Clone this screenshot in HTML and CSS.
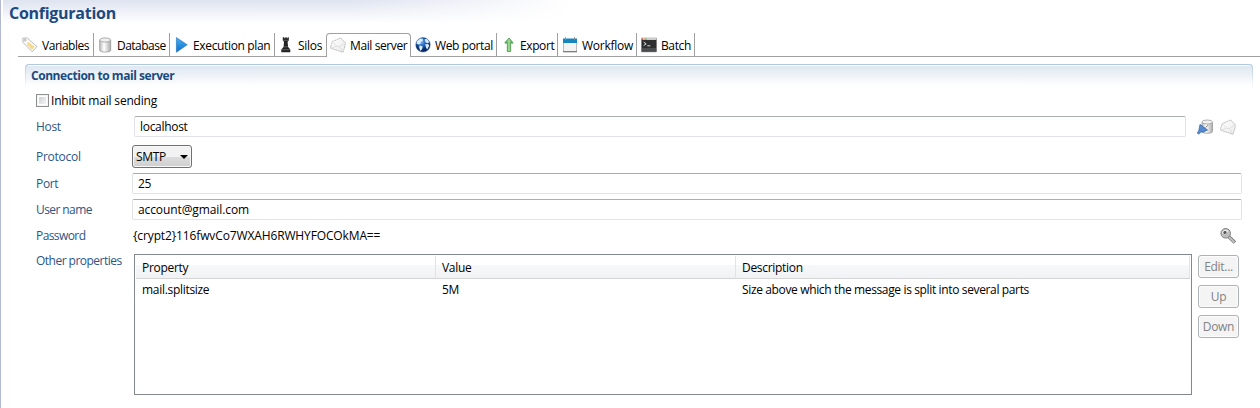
FILE: index.html
```html
<!DOCTYPE html>
<html lang="en">
<head>
<meta charset="utf-8">
<title>Configuration</title>
<link rel="stylesheet" href="styles.css">
</head>
<body>
<svg class="defs" width="0" height="0" aria-hidden="true">
  <defs>
    <linearGradient id="metal"><stop offset="0" stop-color="#bbb"/><stop offset=".4" stop-color="#fff"/><stop offset="1" stop-color="#aaa"/></linearGradient>
    <linearGradient id="blue" x2="0" y2="1"><stop offset="0" stop-color="#4cb0f5"/><stop offset="1" stop-color="#0b6fcc"/></linearGradient>
    <linearGradient id="green"><stop offset="0" stop-color="#3f9a43"/><stop offset=".5" stop-color="#a5dc98"/><stop offset="1" stop-color="#3f9a43"/></linearGradient>
    <linearGradient id="paper" x2="1" y2="1"><stop offset="0" stop-color="#fff"/><stop offset="1" stop-color="#ebebeb"/></linearGradient>
    <radialGradient id="sea" cx=".4" cy=".3"><stop offset="0" stop-color="#6fb5f5"/><stop offset=".6" stop-color="#1c5cb4"/><stop offset="1" stop-color="#082c66"/></radialGradient>
    <symbol id="mail" viewBox="0 0 16 16">
      <path d="M.6 9.8 2.3 4.6 10.8.9l1.4 2 3.2 2.6-.6 4.2-1.8 5.6L.7 11.2z" fill="url(#paper)" stroke="#b0b0b0" stroke-width=".8" stroke-dasharray="2 .5"/>
      <path d="m2.9 5.2 3.7 4.1 2.7.2 5.4-3.5M1.2 10.8l5.4-1.5M9.3 9.5l3.6 5" fill="none" stroke="#dadada" stroke-width=".8"/>
    </symbol>
  </defs>
</svg>
<main class="page">
  <h1 class="title">Configuration</h1>
  <nav class="tabs">
    <div class="tab w-variables">
      <svg class="icon" viewBox="0 0 16 16"><path d="M.7 1.2 5 .8l10 8.8-4.8 5.2L1 5.5z" fill="#fafafa" stroke="#b4b4b4" stroke-width=".9"/><path d="m6 4.8 6.7 5-2.8 3-5.3-5.5z" fill="#f6d98b"/><circle cx="3" cy="3.2" r="1" fill="#fff" stroke="#999" stroke-width=".7"/></svg>
      <span>Variables</span>
    </div>
    <div class="tab w-database">
      <svg class="icon" viewBox="0 0 16 16"><path d="M1.7 3v10.2c0 2.5 11 2.5 11 0V3" fill="url(#metal)" stroke="#999" stroke-width=".8"/><ellipse cx="7.2" cy="3" rx="5.5" ry="2.1" fill="#eee" stroke="#999" stroke-width=".8"/></svg>
      <span>Database</span>
    </div>
    <div class="tab w-plan">
      <svg class="icon" viewBox="0 0 16 16"><path d="M2.4.6 13.2 7.8 2.4 15.2z" fill="url(#blue)" stroke="#1a6dbb" stroke-width=".6"/></svg>
      <span>Execution plan</span>
    </div>
    <div class="tab w-silos">
      <svg class="icon" viewBox="0 0 16 16"><path d="M3.8.3h1.5v1h1v-1h1.4v1h1v-1h1.1v3L8.6 5l.5 5 2.2 2.6v2.7h-9v-2.7L4.6 10 5 5 3.8 3.3z" fill="#222"/><path d="M3.8 3.3h6M4.5 9.8h4.7M2.8 12.7h8" stroke="#777" stroke-width=".7"/></svg>
      <span>Silos</span>
    </div>
    <div class="tab tab-active w-mail">
      <svg class="icon"><use href="#mail"/></svg>
      <span>Mail server</span>
    </div>
    <div class="tab w-portal">
      <svg class="icon" viewBox="0 0 16 16"><circle cx="8" cy="7.8" r="7.2" fill="url(#sea)" stroke="#26508c" stroke-width=".5"/><path d="M2 4.3 5 1.6l2.7.2.4 1.7-2.3 1.6-.3 2-2 .5-1.9-.8zM9.5 2.4l2.3-.7 2.5 3.2-1.5 1.5-2-1zM4.7 8.2l3 1.4-.5 2.4-1.8 2-1.3-3.2zM10.1 7.3l3.2-.3.9 1.7-2.1 3.8-1.2-2.3z" fill="#d7ebfb"/></svg>
      <span>Web portal</span>
    </div>
    <div class="tab w-export">
      <svg class="icon" viewBox="0 0 16 16"><path d="m8 1 4 4.7-.8.7-1.6-.8v9H6.3v-9l-1.7.8-.7-.7z" fill="url(#green)" stroke="#449548" stroke-width=".8"/></svg>
      <span>Export</span>
    </div>
    <div class="tab w-workflow">
      <svg class="icon" viewBox="0 0 16 16"><path d="M1.5 2.5h13v12h-13z" fill="#f3f3f3" stroke="#aaa" stroke-width=".8"/><path d="M1 1.5h14V6H1z" fill="#1786bd"/><path d="M1 14.7h14" stroke="#777" stroke-width="1.2"/><path d="M3.5 0v2.5M12.5 0v2.5" stroke="#999"/></svg>
      <span>Workflow</span>
    </div>
    <div class="tab w-batch">
      <svg class="icon" viewBox="0 0 16 16"><path d="M.5 1.2h15v13.6H.5z" fill="#2d2f31" stroke="#777" stroke-width=".7"/><path d="M.5 1h15v2H.5z" fill="#ccc"/><path d="M1 1.5h1V3H1z" fill="#e33"/><path d="M2.7 1.5h1V3h-1z" fill="#ea2"/><path d="M4.4 1.5h1V3h-1z" fill="#4a4"/><path d="m2.7 5.2 2.5 1.7-2.5 1.7M6.3 8.8h3" fill="none" stroke="#eee" stroke-width=".9"/><path d="M1 11h14v3.5H1z" fill="#4b4d4f"/></svg>
      <span>Batch</span>
    </div>
  </nav>
  <section class="section">
    <h2 class="section-title">Connection to mail server</h2>
    <label class="inhibit"><span class="checkbox"></span><span class="inhibit-text">Inhibit mail sending</span></label>

    <div class="row row-host">
      <span class="label">Host</span>
      <div class="field field-host">localhost</div>
      <svg class="icon icon-db" viewBox="0 0 16 16"><path d="M5 3v9.5c0 2.4 10.5 2.4 10.5 0V3" fill="url(#metal)" stroke="#999" stroke-width=".8"/><ellipse cx="10.2" cy="3" rx="5.3" ry="2" fill="#f2f2f2" stroke="#999" stroke-width=".8"/><path d="m8.6 8.6 2.4-2.4" stroke="#777"/><path d="M3 5.4 10.6 11l-4.1 1.9-2.8.3-2.1 2L.3 13.9l1.5-2.4z" fill="#568bd1" stroke="#2f61a8" stroke-width=".7"/></svg>
      <svg class="icon icon-send"><use href="#mail"/></svg>
    </div>
    <div class="row row-protocol">
      <span class="label">Protocol</span>
      <div class="select"><span>SMTP</span><svg class="arrow" width="8" height="4" viewBox="0 0 8 4"><path d="M0 0h8L4 4z"/></svg></div>
    </div>
    <div class="row row-port">
      <span class="label">Port</span>
      <div class="field">25</div>
    </div>
    <div class="row row-user">
      <span class="label">User name</span>
      <div class="field email">account@gmail.com</div>
    </div>
    <div class="row row-password">
      <span class="label">Password</span>
      <span class="secret">{crypt2}116fwvCo7WXAH6RWHYFOCOkMA==</span>
      <svg class="icon icon-key" viewBox="0 0 16 16"><path d="m8.3 8.2 6.6 6.4" stroke="#777" stroke-width="3.4"/><path d="m8 8 6.5 6.3" stroke="#c4c4c4" stroke-width="1.8"/><circle cx="5.7" cy="5.3" r="4.8" fill="#bebebe" stroke="#777" stroke-width=".9"/><path d="M2.6 5.3c0-3.2 4.4-3.8 5.7-1.5" fill="none" stroke="#eee" stroke-width="1.1"/><circle cx="4.9" cy="4.5" r="1.4" fill="#555"/></svg>
    </div>
    <div class="row row-properties">
      <span class="label">Other properties</span>
      <div class="table">
        <div class="table-row table-head"><span>Property</span><span>Value</span><span>Description</span></div>
        <div class="table-row table-line"><span>mail.splitsize</span><span>5M</span><span class="sentence">Size above which the message is split into several parts</span></div>
      </div>
      <div class="buttons">
        <button class="button" disabled>Edit...</button>
        <button class="button" disabled>Up</button>
        <button class="button" disabled>Down</button>
      </div>
    </div>
  </section>
</main>
</body>
</html>
```
FILE: styles.css
```css
* { box-sizing: border-box; }
body {
  margin: 0;
  background: #fff;
  color: #000;
  font: 12px/16px "Open Sans", "Noto Sans", sans-serif;
  letter-spacing: -0.3px;
  white-space: nowrap;
}
.defs { position: absolute; }
.page {
  height: 408px;
  border-left: 1px solid #b4b9d3;
  overflow: hidden;
}
.title {
  height: 33px;
  margin: 0 0 0 2px;
  padding: 3px 0 0 6px;
  color: #1a4a80;
  font-size: 16px;
  font-weight: 700;
  line-height: 20px;
  letter-spacing: -0.27px;
  background:
    linear-gradient(100deg, transparent 340px, #fff 560px),
    linear-gradient(#dee3f0, #fff 23px);
}
.tabs {
  display: flex;
  height: 24px;
  margin-left: 17px;
  border-bottom: 1px solid #a0a0a0;
}
.tab {
  display: flex;
  flex: none;
  gap: 4px;
  height: 23px;
  padding: 4px 0 0 4px;
  border-right: 1px solid #a0a0a0;
}
.tab span { padding-top: 1px; }
.tab-active {
  height: 24px;
  border: 1px solid #a0a0a0;
  border-bottom: 0;
  border-radius: 4px 4px 0 0;
  background: #fff;
  padding: 3px 0 0 3px;
}
.w-variables, .w-database { width: 76px; }
.w-variables { letter-spacing: -0.46px; }
.w-database { gap: 3px; letter-spacing: -0.52px; }
.w-plan { width: 105px; gap: 3px; letter-spacing: -0.35px; }
.w-silos { width: 51px; border-right: 0; gap: 3px; }
.w-mail { width: 85px; letter-spacing: -0.4px; }
.w-portal { width: 86px; letter-spacing: -0.38px; }
.w-export { width: 61px; gap: 3px; letter-spacing: -0.4px; }
.w-workflow { width: 79px; letter-spacing: -0.26px; }
.w-batch { width: 58px; letter-spacing: -0.38px; }
.icon { display: block; flex: none; width: 16px; height: 16px; }
.section { margin: 7px 7px 0 24px; }
.section-title {
  height: 24px;
  margin: 0;
  padding: 3px 0 0 5px;
  border: 1px solid transparent;
  border-top-color: #b0c8df;
  border-radius: 4px 4px 0 0;
  color: #1a4a80;
  font-size: 12px;
  line-height: 16px;
  letter-spacing: -0.45px;
  background:
    linear-gradient(#fff 1px, #dfe7f1 1px, #fff 21px) padding-box,
    linear-gradient(#b0c8df, #fff) border-box;
}
.inhibit { display: flex; height: 28px; padding: 5px 0 0 11px; letter-spacing: -0.19px; }
.checkbox {
  width: 13px;
  height: 13px;
  margin: 1px 2px 0 0;
  border: 1px solid #8e8f8f;
  background: linear-gradient(135deg, #cdd1d6, #f5f5f5) content-box;
  padding: 2px;
  box-shadow: inset 0 0 0 1px #f4f4f4;
}
.row { display: flex; padding-left: 11px; }
.label { flex: none; width: 96px; padding-top: 3px; color: #2c5685; letter-spacing: -0.34px; }
.field {
  width: 1110px;
  height: 21px;
  padding: 2px 5px;
  border: 1px solid #e2e3ea;
  border-top-color: #abadb3;
  border-radius: 2px;
}
.email { letter-spacing: -0.1px; }
.row-host { height: 29px; }
.field-host { width: 1052px; margin-left: 2px; }
.icon-db { margin: 3px 0 0 11px; }
.icon-send { margin: 3px 0 0 7px; }
.row-protocol { height: 28px; }
.row-protocol .label { padding-top: 4px; letter-spacing: -0.25px; }
.select {
  display: flex;
  align-items: center;
  justify-content: space-between;
  width: 60px;
  height: 23px;
  padding: 0 3px 0 3px;
  border: 1px solid #707070;
  border-radius: 3px;
  background: linear-gradient(#f2f2f2 50%, #dddddd 50%, #cfcfcf);
  box-shadow: inset 0 0 0 1px #f8f8f8;
}
.row-port, .row-user { height: 26px; }
.row-user .label { letter-spacing: -0.58px; }
.row-password { height: 26px; }
.row-password .label { letter-spacing: -0.58px; }
.secret { width: 1088px; padding: 3px 0 0 1px; letter-spacing: -0.13px; }
.icon-key { margin-top: 3px; }
.row-properties .label { width: 98px; padding-top: 2px; letter-spacing: -0.52px; }
.table {
  width: 1058px;
  height: 141px;
  margin-top: 3px;
  padding: 1px;
  border: 1px solid #828790;
}
.table-row { display: grid; grid-template-columns: 300px 300px 1fr; }
.table-head {
  height: 23px;
  border-bottom: 1px solid #d5d5d5;
  background: linear-gradient(#fff 9px, #f7f8fa 9px, #f1f2f4);
}
.table-head span { padding: 4px 0 0 6px; border-right: 1px solid #e2e3e5; }
.table-line { padding-top: 3px; }
.table-line span { padding-left: 6px; }
.table-line .sentence { letter-spacing: -0.36px; }
.buttons { display: flex; flex-direction: column; gap: 7px; padding: 4px 0 0 6px; }
.button {
  width: 41px;
  height: 23px;
  padding: 0;
  border: 1px solid #adb2b5;
  border-radius: 3px;
  background: #f4f4f4;
  box-shadow: inset 0 0 0 1px #fcfcfc;
  color: #838383;
  font: inherit;
  letter-spacing: inherit;
}
```
